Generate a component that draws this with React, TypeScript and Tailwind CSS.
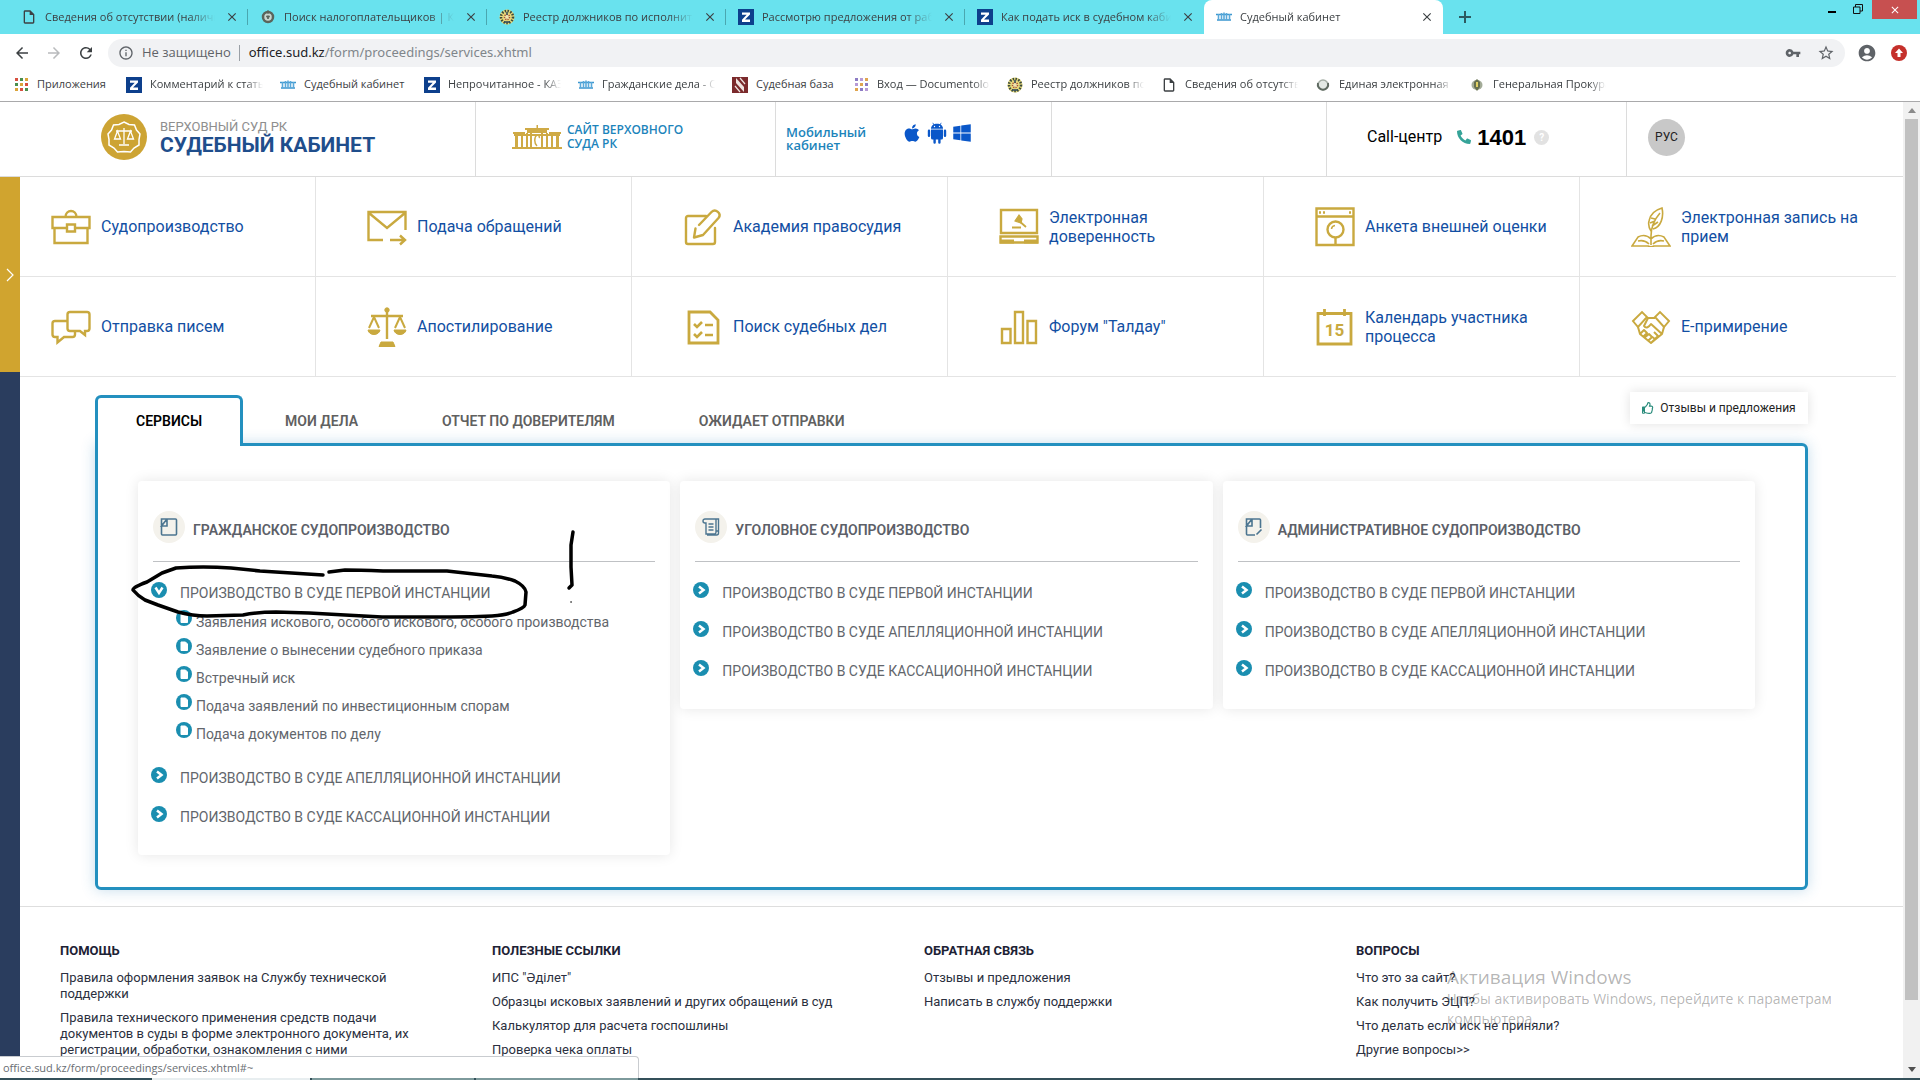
import { ReactNode } from 'react';
import { FaApple, FaPhone, FaRegThumbsUp, FaWindows } from 'react-icons/fa';
import {
	MdAccountCircle,
	MdArrowBack,
	MdArrowForward,
	MdClose,
	MdInfoOutline,
	MdOutlineInsertDriveFile,
	MdRefresh,
	MdStarBorder,
	MdVpnKey,
} from 'react-icons/md';

interface BrowserLink {
	title: string;
	icon: ReactNode;
	width?: string;
}

const ZIcon = () => (
	<svg viewBox="0 0 16 16" className="size-4 shrink-0">
		<rect width="16" height="16" fill="#0d3f8c" />
		<path d="M4 3.5h8v2L7 10.500h5v2.500H4v-2.200l4.700-5H4z" fill="#fff" />
	</svg>
);

const CourtIcon = () => (
	<svg viewBox="0 0 16 16" className="size-4 shrink-0">
		<path d="M0 5.500h16M1 11h14" fill="none" stroke="#3b96cf" strokeWidth="1.500" />
		<path d="M2.500 5v6M5.500 4v7M8 3.500v7M10.500 4v7M13.500 5v6" fill="none" stroke="#5aa9da" strokeWidth="1.600" />
	</svg>
);

const DocIcon = () => <MdOutlineInsertDriveFile className="size-4 shrink-0" />;

const EmblemIcon = () => (
	<svg viewBox="0 0 16 16" className="size-4 shrink-0">
		<circle cx="8" cy="8" r="7.500" fill="#e6d97a" />
		<circle cx="8" cy="8" r="6" fill="none" stroke="#3b4a3c" strokeWidth="2.500" strokeDasharray="1.500 1.300" />
		<circle cx="8" cy="8" r="2.500" fill="#efe6b0" stroke="#a8502f" strokeWidth="1.500" strokeDasharray="1.200 1" />
		<path d="M5 13h6M8 3v3" stroke="#2f4a5c" strokeWidth="1.500" />
	</svg>
);

const WreathIcon = () => (
	<svg viewBox="0 0 16 16" className="size-4 shrink-0">
		<circle cx="8" cy="8" r="5" fill="#c9d6d0" stroke="#5a655c" strokeWidth="2.500" />
		<path d="M8 1v4M6.500 7h3l-1.500 3z" stroke="#5a655c" fill="#5a655c" />
	</svg>
);

const BowlIcon = () => (
	<svg viewBox="0 0 16 16" className="size-4 shrink-0">
		<circle cx="8" cy="8" r="5" fill="#e3e8e4" />
		<circle cx="8" cy="8" r="5" fill="none" stroke="#a5aea6" strokeWidth="1.500" />
		<path d="M3 6A5.200 5.200 0 1 0 13 6" fill="none" stroke="#5f6a61" strokeWidth="2" />
	</svg>
);

const ShieldIcon = () => (
	<svg viewBox="0 0 16 16" className="size-4 shrink-0">
		<ellipse cx="8" cy="8" rx="5.500" ry="5" fill="#a3ab98" />
		<path d="M8 2l3 3v5l-3 4-3-4V5z" fill="#66704e" />
		<path d="M8 5v5" stroke="#e0cf63" strokeWidth="2" />
	</svg>
);

const BaseIcon = () => (
	<svg viewBox="0 0 16 16" className="size-4 shrink-0">
		<rect width="16" height="16" fill="#7b2a2c" />
		<path d="M4 1v5l8 9v-5z" fill="#efe4e1" />
		<path d="M8 1l5 6M3 9l5 6" stroke="#efe4e1" strokeWidth="1.200" />
	</svg>
);

const AndroidIcon = () => (
	<svg viewBox="0 0 20 22" className="w-5 h-[22px]" fill="currentColor">
		<path d="M4 7.500h12V16a1.500 1.500 0 0 1-1.500 1.500h-9A1.500 1.500 0 0 1 4 16z" />
		<path d="M4 6.700C4 3.800 6.600 1.800 10 1.800s6 2 6 4.900z" />
		<path d="M7 3L5.800.8M13 3L14.200.8" stroke="currentColor" strokeWidth=".8" />
		<path d="M2 8.800v5M18 8.800v5M7.600 16v4.500M12.400 16v4.500" stroke="currentColor" strokeWidth="2.400" strokeLinecap="round" />
		<circle cx="7.500" cy="4.500" r=".7" fill="#fff" />
		<circle cx="12.500" cy="4.500" r=".7" fill="#fff" />
	</svg>
);

const dotColors = ['#8d7cc4', '#b79ad6', '#e0a54f'];

const DotsIcon = ({ colors }: { colors: string[] }) => (
	<svg viewBox="0 0 16 16" className="size-4 shrink-0">
		{[1, 6, 11].map((y, row) =>
			[1, 6, 11].map((x, col) => (
				<rect key={`${x}-${y}`} x={x + 1} y={y} width="3" height="3" fill={colors[(row + col) % colors.length]} />
			))
		)}
	</svg>
);

const tabs: BrowserLink[] = [
	{ title: 'Сведения об отсутствии (наличии)', icon: <DocIcon /> },
	{ title: 'Поиск налогоплательщиков | Комитет', icon: <WreathIcon /> },
	{ title: 'Реестр должников по исполнительным', icon: <EmblemIcon /> },
	{ title: 'Рассмотрю предложения от работодателей', icon: <ZIcon /> },
	{ title: 'Как подать иск в судебном кабинете', icon: <ZIcon /> },
	{ title: 'Судебный кабинет', icon: <CourtIcon /> },
];

const bookmarks: BrowserLink[] = [
	{ title: 'Приложения', icon: <DotsIcon colors={['#d8503f', '#4a8f4d', '#dba43a']} />, width: 'w-[72px]' },
	{ title: 'Комментарий к статье', icon: <ZIcon /> },
	{ title: 'Судебный кабинет', icon: <CourtIcon />, width: 'w-[103px]' },
	{ title: 'Непрочитанное - КАЗАХ', icon: <ZIcon /> },
	{ title: 'Гражданские дела - Суд', icon: <CourtIcon /> },
	{ title: 'Судебная база', icon: <BaseIcon />, width: 'w-[80px]' },
	{ title: 'Вход — Documentolog', icon: <DotsIcon colors={dotColors} /> },
	{ title: 'Реестр должников по', icon: <EmblemIcon /> },
	{ title: 'Сведения об отсутствии', icon: <DocIcon /> },
	{ title: 'Единая электронная п', icon: <BowlIcon /> },
	{ title: 'Генеральная Прокуратура', icon: <ShieldIcon /> },
];

const Gold = ({ children }: { children: ReactNode }) => (
	<svg viewBox="0 0 40 40" className="size-10 shrink-0" fill="none" stroke="#c9a93f" strokeWidth="2.400">
		{children}
	</svg>
);

const menu: { title: string; icon: ReactNode }[] = [
	{
		title: 'Судопроизводство',
		icon: (
			<Gold>
				<path d="M15 21H1.500V10h37v11H25M3.500 21v15h33V21M14.500 10c0-8 11-8 11 0M16 17.500h8v7h-8z" />
			</Gold>
		),
	},
	{
		title: 'Подача обращений',
		icon: (
			<Gold>
				<path d="M16 33H1.500V5h37v18M2 6l18 15L38 6M23 33h15M33 28.500l5 4.500-5 4.500" />
			</Gold>
		),
	},
	{
		title: 'Академия правосудия',
		icon: (
			<Gold>
				<path d="M23 9H5a2 2 0 0 0-2 2v24a2 2 0 0 0 2 2h25a2 2 0 0 0 2-2V21M16 18L28.500 5c4-4 10.500 1.500 7 6L20 28l-9 2.500 1.500-9" strokeLinejoin="round" strokeLinecap="round" />
			</Gold>
		),
	},
	{
		title: 'Электронная доверенность',
		icon: (
			<Gold>
				<path d="M2 3h36v23H2z" />
				<path d="M1.500 29.500h37v6h-37z" />
				<path d="M1 34.500h14M25 34.500h14" strokeWidth="4" />
				<path d="M20 8l-4 6 6 2 1-4z" fill="#c9a93f" strokeWidth="1.200" />
				<path d="M19 13l8 7M13 20.500h9" strokeWidth="1.800" />
			</Gold>
		),
	},
	{
		title: 'Анкета внешней оценки',
		icon: (
			<Gold>
				<path d="M1.500 1.500h37V38h-37zM1.500 9.500h37" />
				<circle cx="20.500" cy="22.500" r="8" />
				<path d="M16.500 22a4 4 0 0 1 3.500-3.500" strokeWidth="1.500" />
				<path d="M20.500 31v7M4 5.500h2M8 5.500h2M34 5.500h2" />
			</Gold>
		),
	},
	{
		title: 'Электронная запись на прием',
		icon: (
			<Gold>
				<g strokeWidth="1.600">
					<path d="M20 24c-2-3-3-6-2-10C19 8 24 3 31 1c2 9-1 19-9 21M20 29c0-8 3-16 9-23M19 16l5-2M21 19l6-4M20 11l4 1" />
					<path d="M20 32c-4-4-9-4-13-2l-6 9h16c2 1 4 1 6 0h16l-6-9c-4-2-9-2-13 2zM20 32v6M7 34c4-1 8 0 11 3M33 34c-4-1-8 0-11 3M20 29v3" />
				</g>
			</Gold>
		),
	},
	{
		title: 'Отправка писем',
		icon: (
			<Gold>
				<path d="M19 5h17a2.500 2.500 0 0 1 2.500 2.500v14A2.500 2.500 0 0 1 36 24h-2v4l-5-4H19a2.500 2.500 0 0 1-2.500-2.500v-14A2.500 2.500 0 0 1 19 5zM16 14H4a2.500 2.500 0 0 0-2.500 2.500v11A2.500 2.500 0 0 0 4 30h2.500v5.500L13 30h8.500a2.500 2.500 0 0 0 2.500-2.500V25" />
			</Gold>
		),
	},
	{
		title: 'Апостилирование',
		icon: (
			<Gold>
				<path d="M20 3v29M4 9h32" />
				<path d="M7 10L2 21M7 10l5 11M33 10l-5 11M33 10l5 11" strokeWidth="2" />
				<path d="M1 23h12c-1 6-11 6-12 0zM27 23h12c-1 6-11 6-12 0zM14 35h12l2 4.500H12z" fill="#c9a93f" strokeWidth="1" />
				<circle cx="20" cy="3" r="2.200" fill="#c9a93f" strokeWidth="1" />
			</Gold>
		),
	},
	{
		title: 'Поиск судебных дел',
		icon: (
			<Gold>
				<path d="M6 5h21l8 8v23H6z" strokeWidth="2.800" />
				<path d="M11 17l3 3 5-5M22 18h8M11 27l3 3 5-5M22 28h8" strokeWidth="2.600" />
			</Gold>
		),
	},
	{
		title: 'Форум "Талдау"',
		icon: (
			<Gold>
				<path d="M3 22h8.500v14H3zM16 5h8v31h-8zM28.500 14H37v22h-8.500z" />
			</Gold>
		),
	},
	{
		title: 'Календарь участника процесса',
		icon: (
			<Gold>
				<path d="M3 6.500h33V37H3zM9.500 2v7M29.500 2v7" strokeWidth="2.800" />
				<text x="19.500" y="29" textAnchor="middle" fontFamily="Roboto, sans-serif" fontSize="17" fontWeight="700" fill="#c9a93f" stroke="none">15</text>
			</Gold>
		),
	},
	{
		title: 'E-примирение',
		icon: (
			<Gold>
				<path d="M2 14l9-9 5 5-9 10zM38 14l-9-9-5 5 9 10z" strokeWidth="1.900" />
				<path d="M16 11h8M7 20l2 7 11 9 11-9 2-7M17 11l-4 8c2 3 5 1 7-2l11 10M9 27l4-4 3 3-4 4M13 31l5-4 3 3-4 4M20 36l4-4-4-3M24 32l3-3-4-4" strokeWidth="2" strokeLinejoin="round" />
			</Gold>
		),
	},
];

const sections = ['СЕРВИСЫ', 'МОИ ДЕЛА', 'ОТЧЕТ ПО ДОВЕРИТЕЛЯМ', 'ОЖИДАЕТ ОТПРАВКИ'];

const instances = [
	'ПРОИЗВОДСТВО В СУДЕ ПЕРВОЙ ИНСТАНЦИИ',
	'ПРОИЗВОДСТВО В СУДЕ АПЕЛЛЯЦИОННОЙ ИНСТАНЦИИ',
	'ПРОИЗВОДСТВО В СУДЕ КАССАЦИОННОЙ ИНСТАНЦИИ',
];

const forms = [
	'Заявления искового, особого искового, особого производства',
	'Заявление о вынесении судебного приказа',
	'Встречный иск',
	'Подача заявлений по инвестиционным спорам',
	'Подача документов по делу',
];

const footer = [
	{
		title: 'ПОМОЩЬ',
		links: [
			'Правила оформления заявок на Службу технической поддержки',
			'Правила технического применения средств подачи документов в суды в форме электронного документа, их регистрации, обработки, ознакомления с ними',
		],
	},
	{
		title: 'ПОЛЕЗНЫЕ ССЫЛКИ',
		links: [
			'ИПС "Әділет"',
			'Образцы исковых заявлений и других обращений в суд',
			'Калькулятор для расчета госпошлины',
			'Проверка чека оплаты',
		],
	},
	{
		title: 'ОБРАТНАЯ СВЯЗЬ',
		links: ['Отзывы и предложения', 'Написать в службу поддержки'],
	},
	{
		title: 'ВОПРОСЫ',
		links: ['Что это за сайт?', 'Как получить ЭЦП?', 'Что делать если иск не приняли?', 'Другие вопросы>>'],
	},
];

const FadedText = ({ children, className }: { children: ReactNode; className: string }) => (
	<span
		className={`overflow-hidden whitespace-nowrap mask-r-from-black mask-r-from-85% mask-r-to-100% ${className}`}
	>
		{children}
	</span>
);

const Browser = () => (
	<div className="shrink-0 font-['Open_Sans',sans-serif] text-[#3c4043]">
		<div className="flex justify-between bg-[#69e2ee] h-[34px]">
			<div className="flex flex-1 min-w-0 pl-[9px]">
				{tabs.map((tab, index) => {
					const active = index === tabs.length - 1;
					return (
						<div
							key={index}
							className={
								active
									? 'flex items-center w-[239px] pl-3 pr-[9px] rounded-t-lg bg-white'
									: 'flex items-center w-[239px] py-2'
							}
						>
							<div
								className={
									active
										? 'flex flex-1 items-center min-w-0'
										: index === tabs.length - 2
											? 'flex flex-1 items-center min-w-0 pl-3 pr-[9px]'
											: 'flex flex-1 items-center min-w-0 pl-3 pr-2 border-r border-[#4aa7b0]'
								}
							>
								{tab.icon}
								<FadedText className="flex-1 ml-2 mr-[10px] text-[11px]">{tab.title}</FadedText>
								<button aria-label="Закрыть вкладку">
									<MdClose className="size-[14px]" />
								</button>
							</div>
						</div>
					);
				})}
				<button aria-label="Новая вкладка" className="px-4">
					<svg viewBox="0 0 12 12" className="size-3" stroke="#2c5a60" strokeWidth="2">
						<path d="M6 0v12M0 6h12" />
					</svg>
				</button>
			</div>
			<div className="flex items-start pr-[3px]">
				<button aria-label="Свернуть" className="flex justify-center w-8 pt-[11px]">
					<span className="w-2 h-[2px] bg-black" />
				</button>
				<button aria-label="Восстановить" className="flex justify-center w-6 pr-1 pt-1">
					<svg viewBox="0 0 10 10" className="size-[10px]" fill="none" stroke="#111">
						<path d="M.5 3h6.500v6.500H.5zM2.500 3V.5h7V7H7" />
					</svg>
				</button>
				<button aria-label="Закрыть" className="flex items-center justify-center w-[45px] h-[19px] bg-[#c75050] text-white">
					<MdClose className="size-3" />
				</button>
			</div>
		</div>
		<div className="flex items-center h-9 pt-[2px] pl-[13px] pr-[13px] text-[#5f6368]">
			<button aria-label="Назад"><MdArrowBack className="size-[18px] text-[#3c4043]" /></button>
			<button aria-label="Вперёд" className="ml-[14px]"><MdArrowForward className="size-[18px] text-[#b9bbbd]" /></button>
			<button aria-label="Обновить" className="ml-[14px]"><MdRefresh className="size-[18px] text-[#3c4043]" /></button>
			<div className="flex flex-1 items-center h-7 ml-[13px] pl-[10px] pr-[10px] rounded-full bg-[#f1f2f4]">
				<MdInfoOutline className="size-4" />
				<span className="ml-2 text-[13px]">Не защищено</span>
				<span className="h-4 ml-2 border-l border-[#9aa0a6]" />
				<p className="flex-1 ml-[9px] font-['Noto_Sans',sans-serif] text-[13px] text-[#80868b]">
					<span className="text-[#202124]">office.sud.kz</span>/form/proceedings/services.xhtml
				</p>
				<MdVpnKey className="size-4" />
				<MdStarBorder className="size-[18px] ml-4" />
			</div>
			<MdAccountCircle className="size-5 ml-3" />
			<svg viewBox="0 0 16 16" className="size-4 ml-[14px]">
				<circle cx="8" cy="8" r="8" fill="#c5302b" />
				<path d="M8 3.500L12 8H9.500v4h-3V8H4z" fill="#fff" />
			</svg>
		</div>
		<div className="flex items-center gap-[17px] h-8 pb-[2px] pl-[13px] border-b border-[#a9a9ab]">
			{bookmarks.map((item, index) => (
				<a key={index} href="#" className="flex items-center shrink-0">
					{item.icon}
					<FadedText className={`ml-2 text-[11px] ${item.width ? `${item.width} mask-none` : 'w-[113px]'}`}>
						{item.title}
					</FadedText>
				</a>
			))}
		</div>
	</div>
);

const Header = () => (
	<header className="grid grid-cols-[476fr_300fr_276fr_275fr_300fr_276fr] h-[75px] border-b border-[#dcdcdc]">
		<a href="#" className="flex items-center pl-[101px] border-r border-[#dcdcdc]">
			<svg viewBox="0 0 46 46" className="size-[46px] -mt-1" fill="none" stroke="#fff" strokeWidth="1.500">
				<circle cx="23" cy="23" r="23" fill="#cda434" stroke="none" />
				<path d="M23 8l5 2.500 5.500.5 2 5 3.500 4-1 5.500 0 5.500-5 3-3.500 4-6.500-.5-6.500.5-3.500-4-5-3 0-5.500-1-5.500 3.500-4 2-5 5.500-.5z" />
				<path d="M23 14v16M15 17h16M18 31h10M16.500 17l-3 8h6zM29.500 17l-3 8h6z" strokeWidth="1.300" />
			</svg>
			<span className="ml-[13px] -mt-1 font-['Roboto',sans-serif]">
				<span className="block text-[13px] leading-4 text-[#8e8e8e]">ВЕРХОВНЫЙ СУД РК</span>
				<span className="block text-[21px] leading-5 font-bold text-[#1f4e8c]">СУДЕБНЫЙ КАБИНЕТ</span>
			</span>
		</a>
		<a href="#" className="flex items-center pl-9 border-r border-[#dcdcdc] text-[#1c84bb]">
			<svg viewBox="0 0 50 26" className="w-[50px] h-[26px] -mt-1" fill="#cfaa45">
				<path d="M13 4h24v2H13zM15 6h20v3H15zM1 8h12v2H1zM37 8h12v2H37zM0 23h50v2H0zM3 10h3v13H3zM9 10h2v13H9zM14 9h2v14h-2zM18 9h2v14h-2zM29 9h2v14h-2zM34 9h2v14h-2zM39 10h2v13h-2zM44 10h3v13h-3zM2 10h46v2H2zM24.500 1h1.500v3h-1.500z" />
				<path d="M25 11c-3 2-3 8 0 11M25 11c2 0 3 2 2 3" fill="none" stroke="#cfaa45" strokeWidth="1.500" />
			</svg>
			<span className="w-[120px] ml-[5px] -mt-1 font-['Open_Sans',sans-serif] text-[12px] leading-[14px] font-semibold">
				САЙТ ВЕРХОВНОГО СУДА РК
			</span>
		</a>
		<div className="flex items-center pl-[10px] border-r border-[#dcdcdc]">
			<a href="#" className="w-[116px] font-['Open_Sans',sans-serif] text-[13px] leading-[13px] font-semibold text-[#1c84bb]">
				Мобильный<br />кабинет
			</a>
			<span className="flex items-center gap-[5px] -mt-3 text-[#0a57c9]">
				<FaApple className="size-5" />
				<AndroidIcon />
				<FaWindows className="size-5" />
			</span>
		</div>
		<div className="border-r border-[#dcdcdc]" />
		<div className="flex items-center pl-10 pb-1 border-r border-[#dcdcdc] text-black">
			<span className="font-['Roboto',sans-serif] text-[16px]">Call-центр</span>
			<FaPhone className="size-[14px] ml-[15px] -scale-x-100 text-[#35a398]" />
			<b className="ml-[6px] font-['Liberation_Sans',sans-serif] text-[22px]">1401</b>
			<button className="flex items-center justify-center size-[15px] ml-2 rounded-full bg-[#e2e2e2] text-[10px] text-white font-bold">?</button>
		</div>
		<div className="flex items-center pl-[21px] pb-1">
			<button className="size-[37px] rounded-full bg-[#c8c8c8] font-['Roboto',sans-serif] text-[12px] text-[#222]">РУС</button>
		</div>
	</header>
);

const Arrow = ({ open }: { open?: boolean }) => (
	<svg viewBox="0 0 16 16" className="size-4 shrink-0 -mt-2">
		<circle cx="8" cy="8" r="8" fill="#1a8eb0" />
		<path
			d={open ? 'M4.500 5.500L8 11l3.500-5.500' : 'M6 4.500L10.500 8 6 11.500'}
			fill="none"
			stroke="#fff"
			strokeWidth="2.500"
		/>
	</svg>
);

const CardIcon = ({ children }: { children: ReactNode }) => (
	<span className="flex items-center justify-center size-8 -mt-2 rounded-full bg-[#f4f2ec]">
		<svg viewBox="0 0 18 18" className="size-[18px]" fill="none" stroke="#4c7590" strokeWidth="1.600">
			{children}
		</svg>
	</span>
);

const Card = ({ title, icon, children }: { title: string; icon: ReactNode; children: ReactNode }) => (
	<section className="relative pt-[30px] pb-[18px] rounded bg-white shadow-[0_0_14px_rgba(0,0,0,0.1)]">
		<h2 className="flex items-center h-[51px] mx-[15px] mb-3 pb-[11px] border-b border-[#bfc1c4] text-[14px] font-semibold text-[#5c6068]">
			<CardIcon>{icon}</CardIcon>
			<span className="ml-2">{title}</span>
		</h2>
		{children}
	</section>
);

const Instance = ({ title, open }: { title: string; open?: boolean }) => (
	<a href="#" className="flex items-center h-[39px] pl-[13px] text-[14px] text-[#62666c]">
		<Arrow open={open} />
		<span className="ml-[13px]">{title}</span>
	</a>
);

const Services = () => (
	<main className="pt-[18px] pl-[95px] pr-[95px]">
		<div className="flex items-start justify-between">
			<nav className="relative z-10 flex text-[14px] font-semibold text-[#606060]">
				{sections.map((item, index) => (
					<button
						key={item}
						className={
							index === 0
								? 'h-[51px] px-[38px] pb-px border-3 border-b-0 border-[#2390bf] rounded-t-md bg-white text-black'
								: 'h-[51px] px-[42px] pt-[2px]'
						}
					>
						{item}
					</button>
				))}
			</nav>
			<button className="flex items-center justify-center h-8 w-[178px] -mt-[3px] bg-white shadow-[0_0_12px_rgba(0,0,0,0.12)] text-[12px] text-[#222]">
				<FaRegThumbsUp className="size-3 mr-[6px] text-[#2a8c7c]" />
				Отзывы и предложения
			</button>
		</div>
		<div className="-mt-[3px] pt-[35px] pb-8 pl-10 pr-[50px] border-3 border-[#2390bf] rounded-md rounded-tl-none shadow-[0_0_14px_rgba(60,140,190,0.3)]">
			<div className="grid grid-cols-3 items-start gap-[10px]">
				<Card
					title="ГРАЖДАНСКОЕ СУДОПРОИЗВОДСТВО"
					icon={<path d="M7 1h8.500a1 1 0 0 1 1 1v14a1 1 0 0 1-1 1H2.500a1 1 0 0 1-1-1V1H7L1.500 8H7z" />}
				>
					<Instance title={instances[0]} open />
					<ul className="pb-[11px] -mt-[5px] text-[14px] text-[#62666c]">
						{forms.map((form) => (
							<li key={form}>
								<a href="#" className="flex items-center h-7 pl-[38px]">
									<svg viewBox="0 0 16 16" className="size-4 shrink-0 -mt-2">
										<circle cx="8" cy="8" r="8" fill="#1a8eb0" />
										<path d="M5 4h4.500L11.500 6v6.500H5z" fill="#fff" stroke="#fff" />
									</svg>
									<span className="ml-1">{form}</span>
								</a>
							</li>
						))}
					</ul>
					<Instance title={instances[1]} />
					<Instance title={instances[2]} />
					{/* freehand marker over the first service */}
					<svg
						viewBox="-10 40 460 104"
						className="absolute -left-[10px] top-10 w-[460px] h-[104px] pointer-events-none"
						fill="none"
						stroke="#000"
						strokeWidth="3.500"
						strokeLinecap="round"
						strokeLinejoin="round"
					>
						<path d="M185 94Q154 92 122 90L93 87Q65 85 38 87L24 92 9 101Q-5 106-5 109 0 115 7 119L20 124 40 131Q55 135 69 135L105 134Q120 131 138 131L171 132 207 134 244 136H313Q335 136 354 135 368 134 375 131 386 127 387 124L388 111Q387 105 377 100 366 96 354 95L309 90 245 90Q220 89 207 89L191 91" />
						<path d="M435 51l-2 13v22l1 18-3 3" />
						<path d="M433 121h.1" strokeWidth="1.500" />
					</svg>
				</Card>
				<Card
					title="УГОЛОВНОЕ СУДОПРОИЗВОДСТВО"
					icon={<path d="M3 1h11v12h3M3 1a1.500 1.500 0 0 0 0 4h1v11h9a2 2 0 0 0 1-2V1h2.500v14a2 2 0 0 1-2 2H5M6.500 6h5M6.500 9h5M6.500 12h5" strokeWidth="1.400" />}
				>
					{instances.map((item) => <Instance key={item} title={item} />)}
				</Card>
				<Card
					title="АДМИНИСТРАТИВНОЕ СУДОПРОИЗВОДСТВО"
					icon={<path d="M10 17H2.500a1 1 0 0 1-1-1V1h13a1 1 0 0 1 1 1v8M7 1L1.500 8H7V1M11.500 16.500l5-5" />}
				>
					{instances.map((item) => <Instance key={item} title={item} />)}
				</Card>
			</div>
		</div>
	</main>
);

export default function App() {
	return (
		<div className="relative flex flex-col h-screen overflow-hidden bg-white font-['Roboto',sans-serif]">
			<Browser />
			<div className="flex flex-1 min-h-0">
				<div className="relative flex-1 min-w-0 overflow-hidden">
					<Header />
					<aside className="absolute left-0 top-[75px] bottom-0 w-5 bg-[#2a3d5e]">
						<button aria-label="Открыть меню" className="flex items-center justify-center w-5 h-[195px] bg-[#d0a42f]">
							<svg viewBox="0 0 8 14" className="w-2 h-[14px]" fill="none" stroke="#fff" strokeWidth="1.200">
								<path d="M1 1l6 6-6 6" />
							</svg>
						</button>
					</aside>
					<nav className="grid grid-cols-6 mr-[7px]">
						{menu.map((item, index) => (
							<a
								key={item.title}
								href="#"
								className={`flex items-center h-[100px] pl-[51px] pr-5 border-b border-[#e4e4e4] text-[16px] leading-[19px] text-[#124fa3] ${
									index % 6 === 5 ? '' : 'border-r'
								}`}
							>
								{item.icon}
								<span className="ml-[10px]">{item.title}</span>
							</a>
						))}
					</nav>
					<Services />
					<footer className="relative mt-4 ml-5 border-t border-[#dedede]">
						<div className="grid grid-cols-[432fr_432fr_432fr_547fr] pt-9 pl-10">
							{footer.map((column) => (
								<div key={column.title} className="text-[13px] leading-4 text-[#2b3040]">
									<h3 className="mb-[11px] text-[#1d2235] font-bold">{column.title}</h3>
									<ul className="flex flex-col gap-2 w-[352px]">
										{column.links.map((link) => (
											<li key={link}>
												<a href="#">{link}</a>
											</li>
										))}
									</ul>
								</div>
							))}
						</div>
					</footer>
				</div>
				<div className="flex flex-col items-center justify-between w-[17px] bg-[#f1f1f1]">
					<svg viewBox="0 0 8 5" className="w-2 h-[17px]"><path d="M0 5l4-5 4 5z" fill="#8a8a8a" /></svg>
					<div className="w-[13px] h-[881px] mb-auto bg-[#c1c1c1]" />
					<svg viewBox="0 0 8 5" className="w-2 h-[17px]"><path d="M0 0l4 5 4-5z" fill="#505050" /></svg>
				</div>
			</div>
			<div className="flex h-[2px] shrink-0 bg-[#34505a]">
				<span className="w-[152px]" />
				<span className="w-[158px] bg-[#e8eef0]" />
				<span className="w-[162px] ml-[2px] bg-[#7d9a9c]" />
				<span className="w-[162px] ml-[2px] bg-[#7d9a9c]" />
			</div>
			<div className="absolute left-[1447px] bottom-[51px] w-[420px] font-['Open_Sans',sans-serif] text-[14px] leading-5 text-[#000000]/30 pointer-events-none">
				<p className="text-[19px] leading-6">Активация Windows</p>
				Чтобы активировать Windows, перейдите к параметрам компьютера.
			</div>
			<div className="absolute left-0 bottom-[2px] w-[639px] h-[22px] pl-[3px] border-t border-r border-[#c9ccd0] rounded-tr bg-white font-['Open_Sans',sans-serif] text-[11px] leading-[22px] text-[#6a6e73]">
				office.sud.kz/form/proceedings/services.xhtml#~
			</div>
		</div>
	);
}
